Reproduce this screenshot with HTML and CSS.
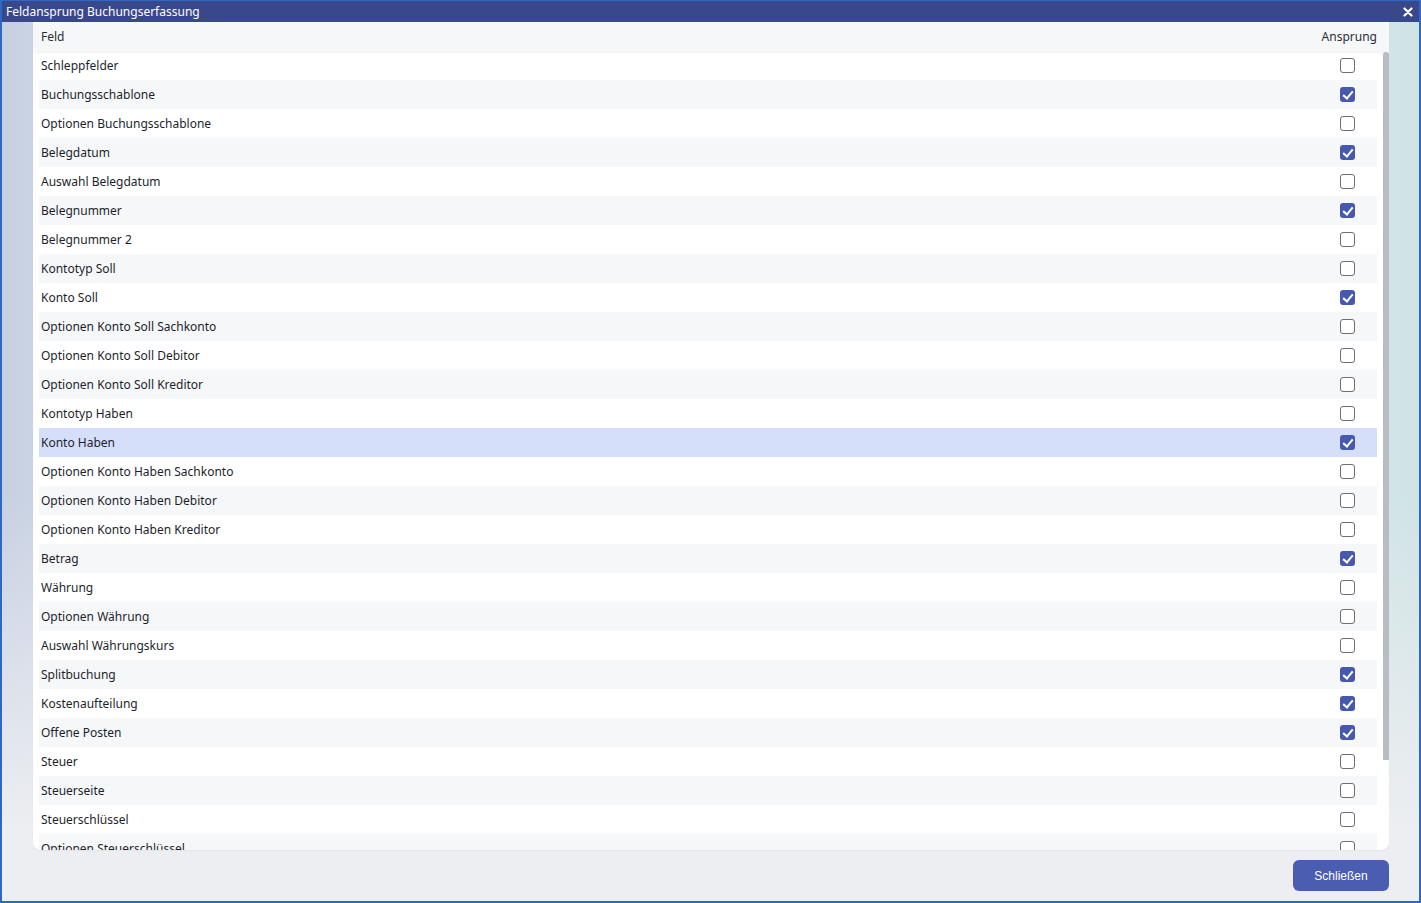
FILE: index.html
```html
<!DOCTYPE html>
<html lang="de">
<head>
<meta charset="utf-8">
<title>Feldansprung Buchungserfassung</title>
<link rel="stylesheet" href="styles.css">
</head>
<body>
<div class="window">
  <div class="titlebar">
    <span class="title">Feldansprung Buchungserfassung</span>
    <svg class="close" width="10" height="10" viewBox="0 0 10 10"><path d="M1.5 1.5L8.5 8.5M8.5 1.5L1.5 8.5" stroke="#fff" stroke-width="2.2" stroke-linecap="round"/></svg>
  </div>
  <div class="content">
    <div class="panel">
      <div class="thead">
        <div class="col-feld">Feld</div>
        <div class="col-ansprung">Ansprung</div>
      </div>
      <div class="tbody">
        <div class="rows">
          <div class="row"><span>Schleppfelder</span><span class="cb"></span></div>
          <div class="row"><span>Buchungsschablone</span><span class="cb on"></span></div>
          <div class="row"><span>Optionen Buchungsschablone</span><span class="cb"></span></div>
          <div class="row"><span>Belegdatum</span><span class="cb on"></span></div>
          <div class="row"><span>Auswahl Belegdatum</span><span class="cb"></span></div>
          <div class="row"><span>Belegnummer</span><span class="cb on"></span></div>
          <div class="row"><span>Belegnummer 2</span><span class="cb"></span></div>
          <div class="row"><span>Kontotyp Soll</span><span class="cb"></span></div>
          <div class="row"><span>Konto Soll</span><span class="cb on"></span></div>
          <div class="row"><span>Optionen Konto Soll Sachkonto</span><span class="cb"></span></div>
          <div class="row"><span>Optionen Konto Soll Debitor</span><span class="cb"></span></div>
          <div class="row"><span>Optionen Konto Soll Kreditor</span><span class="cb"></span></div>
          <div class="row"><span>Kontotyp Haben</span><span class="cb"></span></div>
          <div class="row selected"><span>Konto Haben</span><span class="cb on"></span></div>
          <div class="row"><span>Optionen Konto Haben Sachkonto</span><span class="cb"></span></div>
          <div class="row"><span>Optionen Konto Haben Debitor</span><span class="cb"></span></div>
          <div class="row"><span>Optionen Konto Haben Kreditor</span><span class="cb"></span></div>
          <div class="row"><span>Betrag</span><span class="cb on"></span></div>
          <div class="row"><span>Währung</span><span class="cb"></span></div>
          <div class="row"><span>Optionen Währung</span><span class="cb"></span></div>
          <div class="row"><span>Auswahl Währungskurs</span><span class="cb"></span></div>
          <div class="row"><span>Splitbuchung</span><span class="cb on"></span></div>
          <div class="row"><span>Kostenaufteilung</span><span class="cb on"></span></div>
          <div class="row"><span>Offene Posten</span><span class="cb on"></span></div>
          <div class="row"><span>Steuer</span><span class="cb"></span></div>
          <div class="row"><span>Steuerseite</span><span class="cb"></span></div>
          <div class="row"><span>Steuerschlüssel</span><span class="cb"></span></div>
          <div class="row"><span>Optionen Steuerschlüssel</span><span class="cb"></span></div>
        </div>
        <div class="scrollbar"><div class="thumb"></div></div>
      </div>
    </div>
    <div class="footer">
      <button class="btn">Schließen</button>
    </div>
  </div>
</div>
</body>
</html>
```

FILE: styles.css
```css
html, body {
  margin: 0;
  padding: 0;
  width: 1421px;
  height: 903px;
  overflow: hidden;
}
body {
  font-family: "Noto Sans", "Open Sans", sans-serif;
  font-size: 12px;
  color: #1c1f2b;
}
.window {
  box-sizing: border-box;
  width: 1421px;
  height: 903px;
  border: 2px solid #2e68c2;
  border-top-width: 1px;
  display: flex;
  flex-direction: column;
  background:
    linear-gradient(to bottom, rgba(236,238,241,0) 55%, #eceef1 92%),
    linear-gradient(to right, #c7d0e2 0%, #e4e8ee 18%, #eceef1 50%, #e4ebee 85%, #cfe3e5 100%);
}
.titlebar {
  height: 21px;
  background: #39488a;
  color: #fff;
  display: flex;
  align-items: center;
  justify-content: space-between;
  padding: 0 6px 0 4px;
  flex: none;
}
.title {
  font-size: 12px;
  line-height: 21px;
}
.close {
  display: block;
}
.content {
  flex: 1;
  display: flex;
  flex-direction: column;
  padding: 0 30px 0 31px;
  min-height: 0;
}
.panel {
  height: 828px;
  background: #fff;
  border-radius: 0 0 8px 8px;
  display: flex;
  flex-direction: column;
  overflow: hidden;
  box-shadow: 0 1px 2px rgba(0,0,0,0.04);
}
.thead {
  height: 29px;
  flex: none;
  display: flex;
  align-items: center;
  justify-content: space-between;
  padding: 0 12px 0 8px;
  background: #f6f7f9;
  border-radius: 6px 6px 0 0;
  box-shadow: 0 2px 3px rgba(0,0,0,0.05);
  position: relative;
  z-index: 1;
  color: #2a2e38;
}
.tbody {
  flex: 1;
  min-height: 0;
  display: flex;
  padding-left: 6px;
}
.rows {
  flex: 1;
  overflow: hidden;
}
.scrollbar {
  width: 12px;
  flex: none;
  display: flex;
  justify-content: flex-end;
  padding-top: 1px;
}
.thumb {
  width: 6px;
  height: 708px;
  background: #b9bcc3;
  border-radius: 4px 4px 1px 1px;
}
.row {
  height: 29px;
  display: flex;
  align-items: center;
  justify-content: space-between;
  padding: 0 22px 0 2px;
}
.row:nth-child(even) {
  background: #f6f7f9;
}
.row.selected {
  background: #d5dffa;
}
.cb {
  box-sizing: border-box;
  width: 15px;
  height: 15px;
  border: 1.5px solid #6e6e6e;
  border-radius: 3px;
  background: #fff;
  position: relative;
}
.cb.on {
  border: none;
  background: #4659ae;
}
.cb.on::after {
  content: "";
  position: absolute;
  left: 5px;
  top: 2px;
  width: 4px;
  height: 8px;
  border: solid #fff;
  border-width: 0 2px 2px 0;
  transform: rotate(40deg);
}
.footer {
  flex: 1;
  display: flex;
  justify-content: flex-end;
  align-items: flex-start;
  padding-top: 10px;
}
.btn {
  width: 96px;
  height: 31px;
  border: none;
  border-radius: 6px;
  background: #4a5db0;
  color: #fff;
  font-family: "Liberation Sans", Arial, sans-serif;
  font-size: 12px;
}
```
